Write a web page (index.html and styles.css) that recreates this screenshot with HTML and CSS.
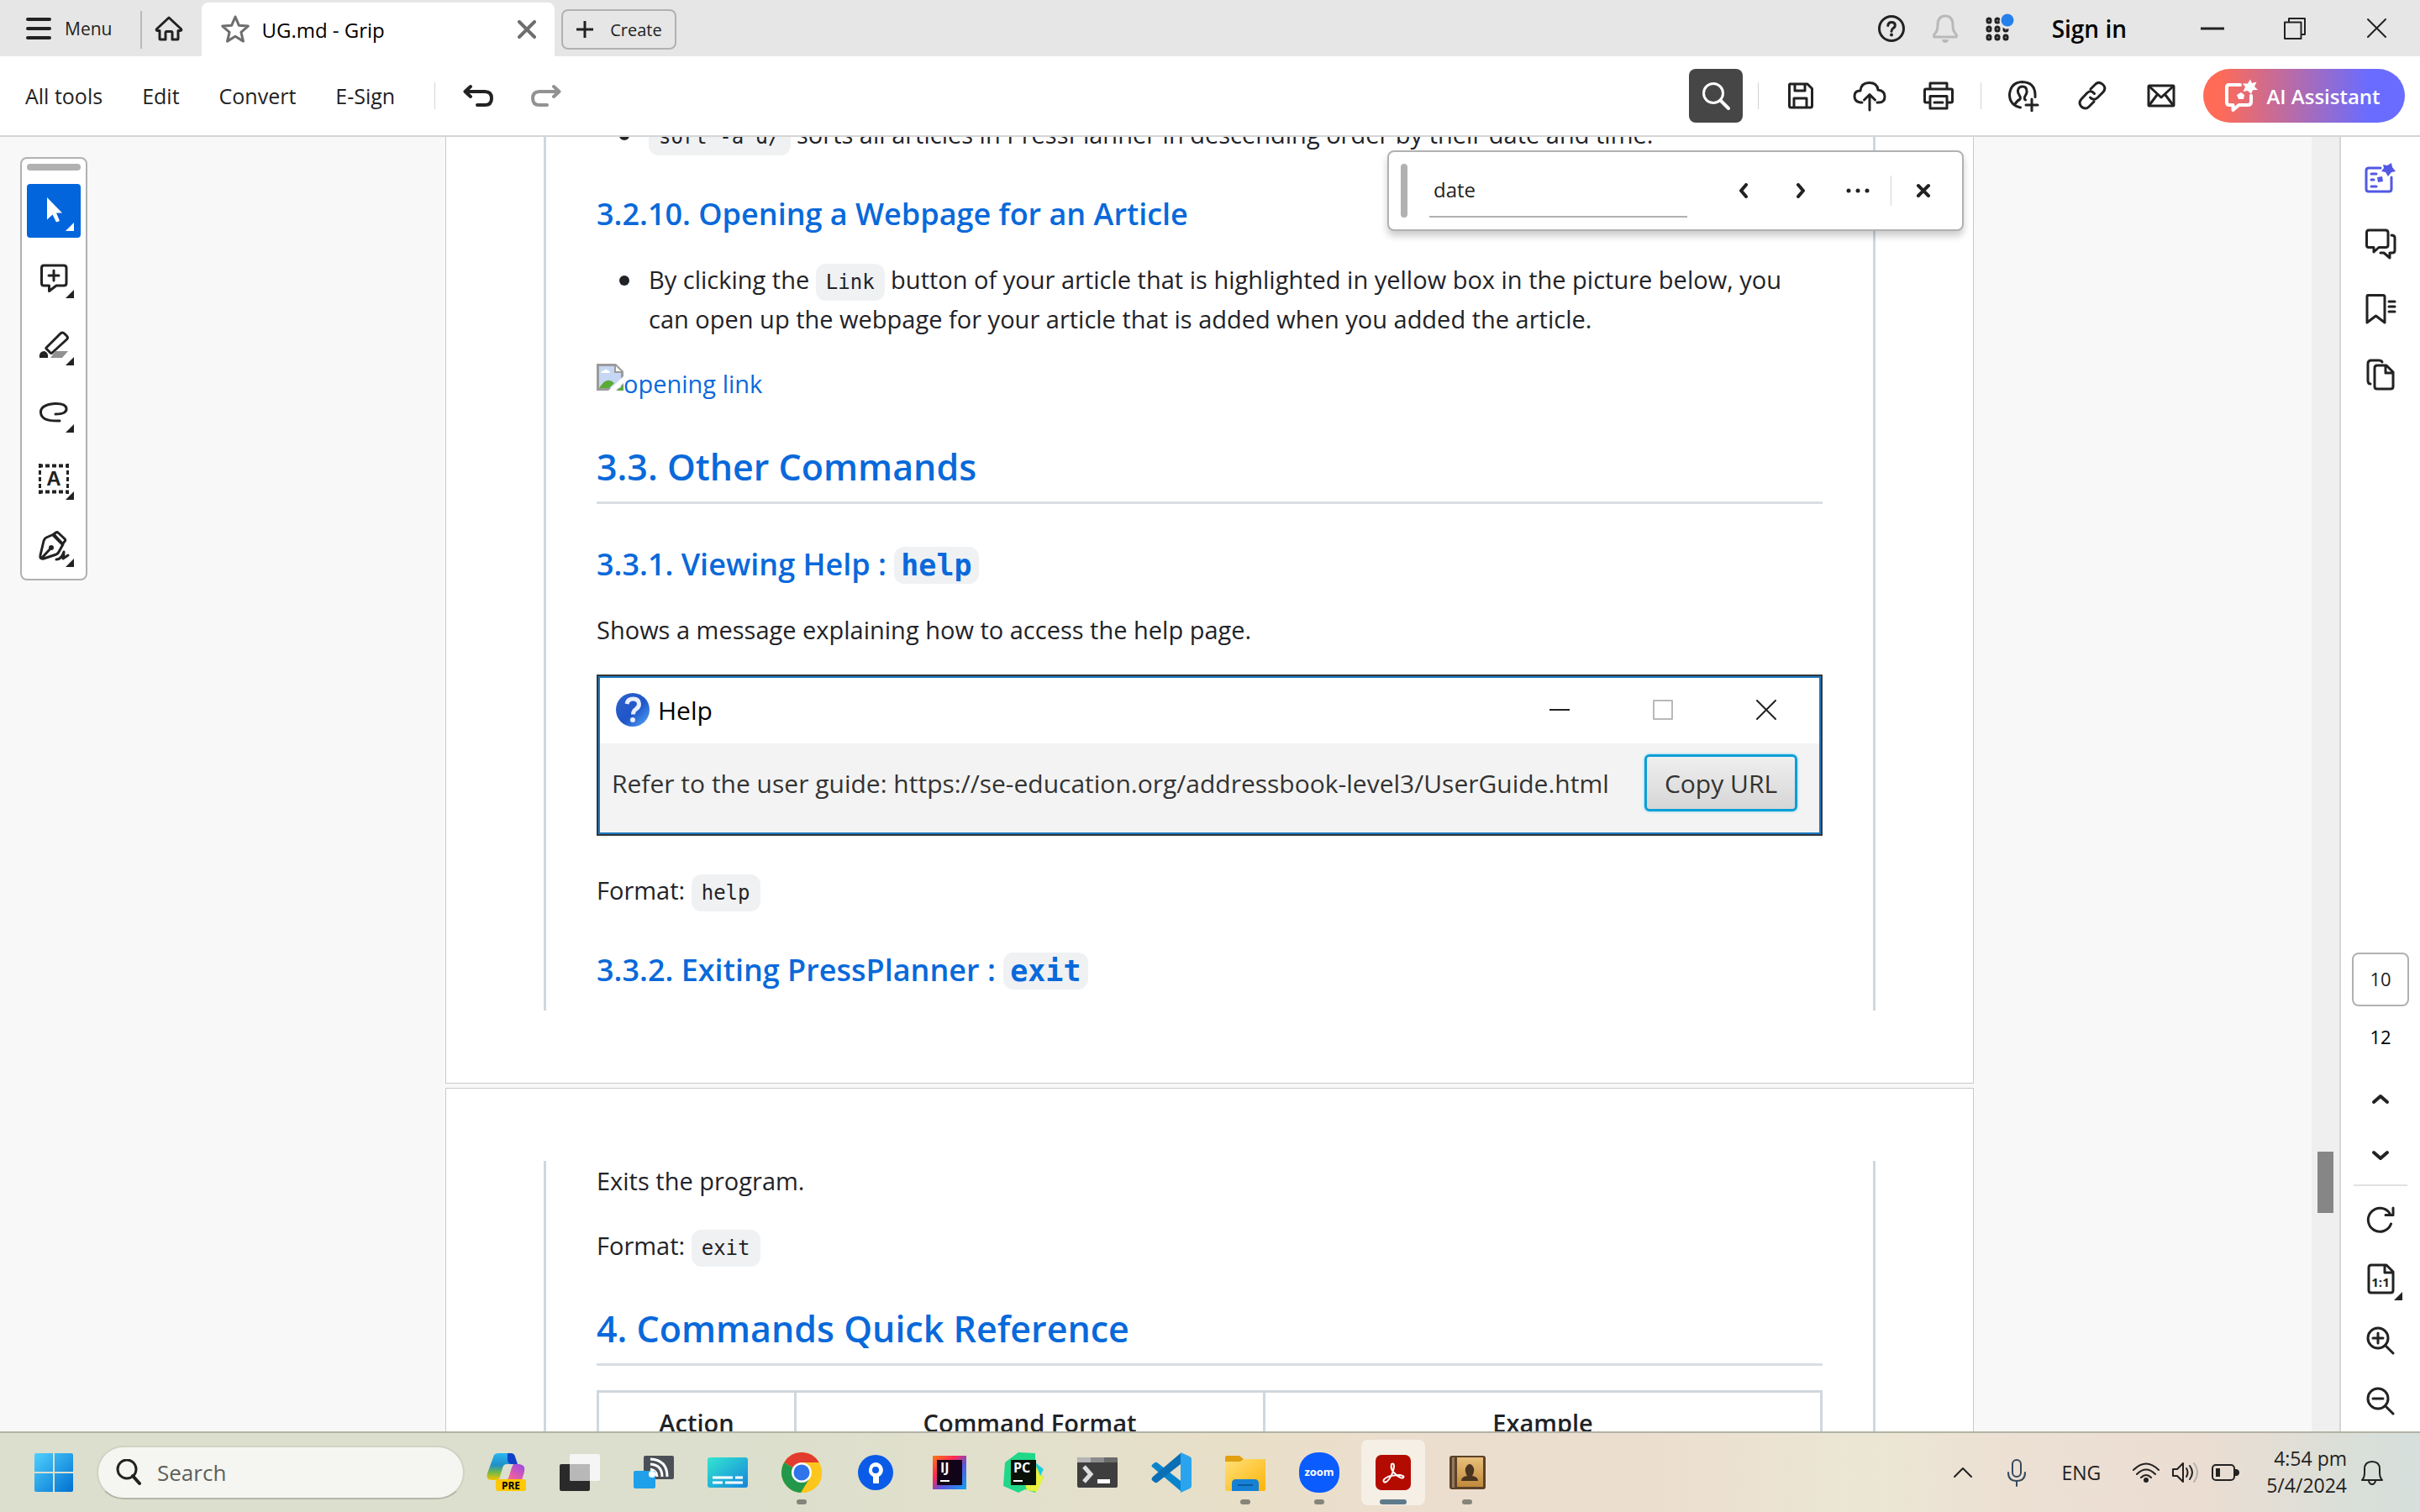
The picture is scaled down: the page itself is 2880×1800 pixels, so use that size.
FILE: index.html
```html
<!DOCTYPE html>
<html lang="en">
<head>
<meta charset="utf-8">
<title>UG.md - Grip</title>
<link rel="stylesheet" href="styles.css">
</head>
<body>
<header class="titlebar">
  <button class="menu-btn"><svg class="ico" width="30" height="26" viewBox="0 0 30 26"><path d="M2 2h26M2 13h26M2 24h26" stroke-width="4"/></svg>Menu</button>
  <span class="title-divider"></span>
  <button class="home-btn" aria-label="Home"><svg class="ico" width="34" height="30" viewBox="0 0 34 30"><path d="M17 2 2.500 15.500q-1 1.500 1 2H6V27q0 1 1 1h6v-8q0-1.500 1.500-1.500h5q1.500 0 1.500 1.500v8h6q1 0 1-1v-9.500h2.500q2-.5 1-2z" stroke-width="3"/></svg></button>
  <div class="tab">
    <svg class="ico gray" width="36" height="36" viewBox="0 0 36 36"><path d="M18 3l4.300 10.200 11 .9-8.400 7.200 2.600 10.800L18 26.300l-9.500 5.800 2.600-10.800-8.400-7.200 11-.9z" stroke-width="3"/></svg>
    <span class="tab-name">UG.md - Grip</span>
    <button class="tab-close" aria-label="Close tab"><svg class="ico gray" width="22" height="22" viewBox="0 0 22 22"><path d="M2 2l18 18M20 2 2 20" stroke-width="4"/></svg></button>
  </div>
  <button class="create-btn"><svg class="ico" width="20" height="20" viewBox="0 0 20 20"><path d="M10 0v20M0 10h20" stroke-width="3"/></svg>Create</button>
  <div class="title-right">
    <button class="t-ico" aria-label="Help"><svg class="ico" width="34" height="34" viewBox="0 0 34 34"><circle cx="17" cy="17" r="14.500" stroke-width="3"/><path d="M12.800 13.500q.4-4 4.400-4t4.200 3.600q0 2-2.200 3.500t-2.200 3.600" stroke-width="3"/><circle cx="17" cy="24.500" r="2" fill="#222" stroke="none"/></svg></button>
    <button class="t-ico" aria-label="Notifications"><svg class="ico pale" width="34" height="36" viewBox="0 0 34 36"><path d="M4 28q-1.500-2 1.500-5 2.500-3 2.500-9 0-11 9-11t9 11q0 6 2.500 9 3 3 1.500 5z" stroke-width="3"/><path d="M13 31h8q-.5 4-4 4t-4-4z" fill="#b9b9b9" stroke="none"/></svg></button>
    <button class="t-ico" aria-label="Apps"><svg class="ico" width="36" height="36" viewBox="0 0 36 36"><g stroke-width="3"><rect x="4" y="6" width="4" height="5" rx="2"/><rect x="14" y="6" width="4" height="5" rx="2"/><rect x="4" y="16" width="4" height="5" rx="2"/><rect x="14" y="16" width="4" height="5" rx="2"/><rect x="24" y="16" width="4" height="5" rx="2"/><rect x="4" y="26" width="4" height="5" rx="2"/><rect x="14" y="26" width="4" height="5" rx="2"/><rect x="24" y="26" width="4" height="5" rx="2"/></g><circle cx="28" cy="9" r="9.500" fill="#e6e6e6" stroke="none"/><circle cx="28" cy="8" r="7.500" fill="#2680eb" stroke="none"/></svg></button>
    <button class="signin">Sign in</button>
    <button class="win" aria-label="Minimize"><svg class="ico" width="28" height="26" viewBox="0 0 28 26"><path d="M0 13h28" stroke-width="3"/></svg></button>
    <button class="win" aria-label="Restore"><svg class="ico" width="26" height="26" viewBox="0 0 26 26"><path d="M6 5V1h19v19h-4M1 5.500h19.500V25H1z" stroke-width="2"/></svg></button>
    <button class="win" aria-label="Close"><svg class="ico" width="24" height="26" viewBox="0 0 24 26"><path d="M1 2l21 21M22 2 1 23" stroke-width="2"/></svg></button>
  </div>
</header>

<nav class="toolbar">
  <button class="word">All tools</button>
  <button class="word">Edit</button>
  <button class="word">Convert</button>
  <button class="word">E-Sign</button>
  <span class="bar-divider"></span>
  <button class="history" aria-label="Undo"><svg class="ico" width="36" height="28" viewBox="0 0 36 28"><path d="M9 3 2.500 9 9 15M3 9h23q8 0 8 8t-8 8h-9" stroke-width="4"/></svg></button>
  <button class="history" aria-label="Redo"><svg class="ico dim" width="36" height="28" viewBox="0 0 36 28"><path d="M27 3l6.500 6L27 15M33 9H10q-8 0-8 8t8 8h9" stroke-width="4"/></svg></button>
  <div class="bar-right">
    <button class="sq active" aria-label="Find"><svg class="ico white" width="36" height="36" viewBox="0 0 36 36"><circle cx="15" cy="15" r="11.500" stroke-width="3"/><path d="M23.500 23.500 33 33" stroke-width="4"/></svg></button>
    <span class="bar-divider"></span>
    <button class="sq" aria-label="Save"><svg class="ico" width="36" height="36" viewBox="0 0 36 36"><path d="M5 4h21l5.500 5.500V30q0 2-2 2h-23q-2 0-2-2V5zM11 4v8h12V4M10 32V21h15v11" stroke-width="3"/></svg></button>
    <button class="sq" aria-label="Upload"><svg class="ico" width="40" height="38" viewBox="0 0 40 38"><path d="M11 27H9q-7-1-7-7.500T9 13q1-9.500 10.500-9.500T30 12q8 1 8 8t-7 7h-2" stroke-width="3"/><path d="M20 36V18M13.500 24l6.500-6.500 6.500 6.500" stroke-width="3"/></svg></button>
    <button class="sq" aria-label="Print"><svg class="ico" width="38" height="36" viewBox="0 0 38 36"><path d="M9 10V3h20v7M9 26H4q-1.500 0-1.500-1.500v-13Q2.500 10 4 10h30q1.500 0 1.500 1.500v13Q35.500 26 34 26h-5M9 18.500h20V33H9zM14 26h10" stroke-width="3"/></svg></button>
    <span class="bar-divider"></span>
    <button class="sq" aria-label="Add people"><svg class="ico" width="38" height="38" viewBox="0 0 38 38"><path d="M15.500 33Q2.500 30 2.500 17.500 4 3 17.500 2.500 32.500 3 33 17.500v3" stroke-width="3"/><path d="M9 29q3-4.500 5.500-5.500 2-1.500-.5-5.500-2-3-1.500-5.500Q13.500 8 18 8t5 5q.5 2.500-1.500 5.500-2.500 4 0 5.500M29 23v14M22 30h14" stroke-width="3"/></svg></button>
    <button class="sq" aria-label="Copy link"><svg class="ico" width="36" height="36" viewBox="0 0 36 36"><path d="M16 10l6-6q4-3.500 8.500.5t.5 9l-7 7q-4.500 4-8.500-.5M20 25l-6 6q-4 4-9 0-4-4.500 0-9l7-7.500q4.500-4 8.500 1" stroke-width="3"/></svg></button>
    <button class="sq" aria-label="Email"><svg class="ico" width="34" height="28" viewBox="0 0 34 28"><rect x="2" y="2" width="30" height="24" rx="1" stroke-width="3"/><path d="M3 3l14 13L31 3M3 25l9-12M31 25l-9-12" stroke-width="3"/></svg></button>
    <button class="ai-btn"><svg class="ico white" width="40" height="40" viewBox="0 0 40 40"><path d="M19 7H6q-3 0-3 3v18q0 3 3 3h4.500v6l7-6H28q4 0 4-4v-7" stroke-width="4"/><path d="M31 .5l2 4.500 5.500-1.500-2.500 5.500 4 4-6 .3-2 4.700-4-4-5.500 1 2.500-5.500L22 5.500h6z" fill="#fff" stroke="none"/><path d="M15 19l5-3 4 3-1 5h-6z" fill="#fff" stroke="none"/></svg>AI Assistant</button>
  </div>
</nav>

<main class="workspace">
  <aside class="rail">
    <div class="tools">
      <span class="grip"></span>
      <button class="tool on" aria-label="Select"><svg class="ico" width="64" height="64" viewBox="0 0 64 64"><path d="M24 16v26.500l6.500-6 4.500 9 4-1.500-4-9.500h7z" fill="#fff" stroke="none"/><path d="M56 46v10H46z" fill="#fff" stroke="none"/></svg></button>
      <button class="tool" aria-label="Comment"><svg class="ico" width="64" height="64" viewBox="0 0 64 64"><path d="M20 17h24q3 0 3 3v18q0 3-3 3h-9l-8.500 6.500V41H20q-2.500 0-2.500-3V20q0-3 2.500-3zM26 29h12M32 23v12" stroke-width="3"/><path d="M56 46v10H46z" fill="#222" stroke="none"/></svg></button>
      <button class="tool" aria-label="Highlight"><svg class="ico" width="64" height="64" viewBox="0 0 64 64"><path d="M23 35l17-17q2.500-2 4.500 0l3 3q2 2 0 4L30 41q-1 1-2 0l-5-5q-.5-.5 0-1z" stroke-width="3"/><path d="M15 47q-1-8 6-8 5 2 4 8z" fill="#222" stroke="none"/><path d="M28 47l6-8h15l-7 8z" fill="#929292" stroke="none"/><path d="M56 46v10H46z" fill="#222" stroke="none"/></svg></button>
      <button class="tool" aria-label="Draw"><svg class="ico" width="64" height="64" viewBox="0 0 64 64"><path d="M34 34q14 0 13-7-1-6-14-5.500Q16 23 16.500 32 17 43 39 42" stroke-width="3"/><path d="M56 46v10H46z" fill="#222" stroke="none"/></svg></button>
      <button class="tool letter" aria-label="Text"><svg class="ico" width="64" height="64" viewBox="0 0 64 64"><path d="M14 15.500h36M14 46.500h36" stroke-width="4" stroke-dasharray="5 3" stroke-linecap="butt"/><path d="M15.500 13v36M48.500 13v36" stroke-width="3" stroke-dasharray="5 3" stroke-linecap="butt"/><text x="32" y="39" text-anchor="middle" class="svg-a">A</text><path d="M56 46v10H46z" fill="#222" stroke="none"/></svg></button>
      <button class="tool" aria-label="Sign"><svg class="ico" width="64" height="64" viewBox="0 0 64 64"><path d="M32 17l-9 4q-2 1-3 4l-4 17q-1 5 4 4l15-5q2-1 3-3l5-9zM18 45l11-12" stroke-width="3"/><path d="M31 18l3.500-3q1.500-1 3 .5l7.500 7q1.500 1.500 0 3L42 29z" stroke-width="3"/><circle cx="29" cy="33" r="3" fill="#222" stroke="none"/><path d="M35 47q6 0 9-9 0 4-1 8l6-4" stroke-width="3"/><path d="M56 46v10H46z" fill="#222" stroke="none"/></svg></button>
    </div>
  </aside>

  <section class="viewer">
    <div class="pages">
      <div class="page page-first">
        <article class="sheet">
          <ul><li><code>sort -a d/</code> sorts all articles in PressPlanner in descending order by their date and time.</li></ul>
          <h3><a href="#webpage">3.2.10. Opening a Webpage for an Article</a></h3>
          <ul><li>By clicking the <code>Link</code> button of your article that is highlighted in yellow box in the picture below, you can open up the webpage for your article that is added when you added the article.</li></ul>
          <p><a href="#link"><svg class="broken" width="32" height="32" viewBox="0 0 32 32"><path d="M0 0h23l9 9v23H0z" fill="#9b9b9b"/><path d="M3 3h18v8h8v18H3z" fill="#c5d7f4"/><path d="M23 3l6 6h-6z" fill="#fff"/><path d="M5 11q1-3 4-3 2-3 4 0 3 0 3 3z" fill="#fff"/><path d="M3 29q9-15 18-6l-6 6z" fill="#5aab35"/><path d="M32 15v8l-9 9h-9z" fill="#fff"/><path d="M32 25v7h-7z" fill="#5aab35"/></svg>opening link</a></p>
          <h2><a href="#other">3.3. Other Commands</a></h2>
          <h3><a href="#help">3.3.1. Viewing Help : <code>help</code></a></h3>
          <p>Shows a message explaining how to access the help page.</p>
          <div class="dialog">
            <div class="dialog-head">
              <svg width="42" height="42" viewBox="0 0 42 42"><defs><linearGradient id="hq" x1="0" y1="0" x2="1" y2="1"><stop offset="0" stop-color="#2f62cc"/><stop offset=".55" stop-color="#1f55c8"/><stop offset="1" stop-color="#55aaf8"/></linearGradient></defs><circle cx="21" cy="21" r="20" fill="url(#hq)"/><path d="M14 14q1-6 7.500-6t7 6q0 4-4 6.500-3 2-3 6" fill="none" stroke="#e8eefc" stroke-width="5"/><circle cx="21" cy="33" r="3" fill="#e8eefc"/></svg>
              <span class="dialog-title">Help</span>
              <svg class="ico" width="24" height="24" viewBox="0 0 24 24"><path d="M0 12h24" stroke-width="2"/></svg>
              <svg class="ico pale" width="24" height="24" viewBox="0 0 24 24"><path d="M1 1h22v22H1z" stroke-width="2"/></svg>
              <svg class="ico" width="24" height="24" viewBox="0 0 24 24"><path d="M1 1l22 22M23 1 1 23" stroke-width="2"/></svg>
            </div>
            <div class="dialog-body"><span>Refer to the user guide: https://se-education.org/addressbook-level3/UserGuide.html</span><button class="copy">Copy URL</button></div>
          </div>
          <p>Format: <code>help</code></p>
          <h3><a href="#exit">3.3.2. Exiting PressPlanner : <code>exit</code></a></h3>
        </article>
      </div>
      <div class="page page-next">
        <article class="sheet">
          <p>Exits the program.</p>
          <p>Format: <code>exit</code></p>
          <h2><a href="#reference">4. Commands Quick Reference</a></h2>
          <table>
            <thead><tr><th class="c1">Action</th><th class="c2">Command Format</th><th>Example</th></tr></thead>
          </table>
        </article>
      </div>
    </div>
    <form class="find">
      <span class="find-grip"></span>
      <input class="find-input" type="text" value="date" aria-label="Find text">
      <button type="button" class="f-btn" aria-label="Previous"><svg class="ico" width="12" height="18" viewBox="0 0 12 18"><path d="M9 2 3 9l6 7" stroke-width="4"/></svg></button>
      <button type="button" class="f-btn" aria-label="Next"><svg class="ico" width="12" height="18" viewBox="0 0 12 18"><path d="M3 2l6 7-6 7" stroke-width="4"/></svg></button>
      <button type="button" class="f-btn" aria-label="More"><svg width="28" height="6" viewBox="0 0 28 6"><g fill="#222"><circle cx="3" cy="3" r="2.500"/><circle cx="14" cy="3" r="2.500"/><circle cx="25" cy="3" r="2.500"/></g></svg></button>
      <span class="find-divider"></span>
      <button type="button" class="f-btn" aria-label="Close"><svg class="ico" width="18" height="18" viewBox="0 0 18 18"><path d="M3 3l12 12M15 3 3 15" stroke-width="4"/></svg></button>
    </form>
  </section>

  <div class="scrollbar"><span class="thumb"></span></div>

  <aside class="side">
    <div class="side-top">
      <button aria-label="AI summary"><svg class="ico violet" width="38" height="38" viewBox="0 0 38 38"><path d="M19 7H5q-3 0-3 3v22q0 3 3 3h24q3 0 3-3V18M8 14h6M8 21h3M8 29h6" stroke-width="3"/><path d="M22 3l5 1 5-3 1 5 4 5-5 1-4 5-3-5-5-1 3-4z" fill="#5258e4" stroke="none"/><path d="M15 18l6-1 1 6-6 1z" fill="#5258e4" stroke="none"/></svg></button>
      <button aria-label="Comments"><svg class="ico" width="38" height="38" viewBox="0 0 38 38"><path d="M5 3h20q3 0 3 3v15q0 2.500-3 2.500h-8L11 29v-5.500H5q-2.500 0-2.500-2.500V6Q2.500 3 5 3z" stroke-width="3"/><path d="M32 9q4 0 4 3v15q0 3-3 3h-3v6l-7-6h-4" stroke-width="3"/></svg></button>
      <button aria-label="Bookmarks"><svg class="ico" width="38" height="38" viewBox="0 0 38 38"><path d="M4 2.500h18q2 0 2 2V35l-10.500-8L3 35V4q0-1.500 1-1.500zM29 10h7M29 16h7M29 22h7" stroke-width="3"/></svg></button>
      <button aria-label="Page thumbnails"><svg class="ico" width="38" height="38" viewBox="0 0 38 38"><path d="M7 30q-3 0-3-4V6q0-4 4-4h9q3 0 4 2" stroke-width="3"/><path d="M15 8h11l8 8v17q0 3-3 3H15q-3 0-3-3V11q0-3 3-3zM25 8v9h9" stroke-width="3"/></svg></button>
    </div>
    <div class="side-bottom">
      <input class="page-no" type="text" value="10" aria-label="Page number">
      <span class="page-total">12</span>
      <button class="step" aria-label="Previous page"><svg class="ico" width="22" height="14" viewBox="0 0 22 14"><path d="M3 11l8-7 8 7" stroke-width="4"/></svg></button>
      <button class="step" aria-label="Next page"><svg class="ico" width="22" height="14" viewBox="0 0 22 14"><path d="M3 3l8 7 8-7" stroke-width="4"/></svg></button>
      <span class="side-divider"></span>
      <button class="zoomer" aria-label="Rotate"><svg class="ico" width="34" height="34" viewBox="0 0 34 34"><path d="M29.500 22A14 14 0 1 1 28 9.500M32 3v8.500h-9" stroke-width="3"/></svg></button>
      <button class="zoomer" aria-label="Fit"><svg class="ico" width="64" height="50" viewBox="0 0 64 50"><path d="M21 7h18l8 8v22q0 3-3 3H21q-3 0-3-3V10q0-3 3-3zM37 7v9h9" stroke-width="3"/><text x="32" y="33" text-anchor="middle" class="svg-11">1:1</text><path d="M58 39v10H48z" fill="#222" stroke="none"/></svg></button>
      <button class="zoomer" aria-label="Zoom in"><svg class="ico" width="34" height="34" viewBox="0 0 34 34"><circle cx="14" cy="14" r="12" stroke-width="3"/><path d="M22.500 22.500 32 32M8 14h12M14 8v12" stroke-width="3"/></svg></button>
      <button class="zoomer" aria-label="Zoom out"><svg class="ico" width="34" height="34" viewBox="0 0 34 34"><circle cx="14" cy="14" r="12" stroke-width="3"/><path d="M22.500 22.500 32 32M8 14h12" stroke-width="3"/></svg></button>
    </div>
  </aside>
</main>

<footer class="taskbar">
  <svg width="0" height="0" class="defs"><defs>
    <linearGradient id="win" x1="0" y1="0" x2="1" y2="1"><stop offset="0" stop-color="#4fd0ff"/><stop offset="1" stop-color="#0070d0"/></linearGradient>
    <linearGradient id="cpa" x1="0" y1="0" x2="0" y2="1"><stop offset="0" stop-color="#28b6f0"/><stop offset=".45" stop-color="#1f8fc8"/><stop offset=".7" stop-color="#6fb84a"/><stop offset="1" stop-color="#f5c400"/></linearGradient>
    <linearGradient id="cpb" x1="1" y1="0" x2="0" y2="1"><stop offset="0" stop-color="#9a48e8"/><stop offset=".6" stop-color="#f0609a"/><stop offset="1" stop-color="#ff9060"/></linearGradient>
    <linearGradient id="cap" x1="0" y1="0" x2="1" y2="1"><stop offset="0" stop-color="#33e6d0"/><stop offset="1" stop-color="#1585dc"/></linearGradient>
    <linearGradient id="ij" x1="0" y1="0" x2="1" y2="1"><stop offset="0" stop-color="#f97a12"/><stop offset=".35" stop-color="#fe2857"/><stop offset=".6" stop-color="#5a55e0"/><stop offset="1" stop-color="#10a0f0"/></linearGradient>
    <linearGradient id="fold" x1="0" y1="0" x2="1" y2="1"><stop offset="0" stop-color="#ffe07a"/><stop offset="1" stop-color="#fcb408"/></linearGradient>
    <linearGradient id="bk" x1="0" y1="0" x2="0" y2="1"><stop offset="0" stop-color="#e8bf7a"/><stop offset="1" stop-color="#c08a3c"/></linearGradient>
  </defs></svg>
  <button class="start" aria-label="Start"><svg width="46" height="46" viewBox="0 0 46 46"><path d="M2 0h20v22H0V2q0-2 2-2zM24 0h20q2 0 2 2v20H24zM0 24h22v22H2q-2 0-2-2zM24 24h22v20q0 2-2 2H24z" fill="url(#win)"/></svg></button>
  <label class="search"><svg class="ico" width="30" height="32" viewBox="0 0 30 32"><circle cx="13" cy="12" r="11" stroke-width="3"/><path d="M20 20l8 9" stroke-width="4"/></svg><input type="text" placeholder="Search" aria-label="Search"></label>
  <div class="apps">
    <button aria-label="Copilot"><svg width="48" height="48" viewBox="0 0 48 48"><path d="M10 3q2-2 5-2h14q4 0 5 4l3 9H25q-4 0-5 5l-3 10q-1 4-5 4H7q-7 0-5-8z" fill="url(#cpa)"/><path d="M26 1h4q4 0 5 4l3 9h-8q-4-1-4-6z" fill="#1040c8"/><path d="M33 14h7q8 1 6 9l-3 10q-1 4-6 4H14q4-1 5-4h5q3-1 4-5l3-10z" fill="url(#cpb)"/><rect x="12" y="32" width="36" height="14" rx="3" fill="#ffc800"/><text x="30" y="44" text-anchor="middle" class="svg-pre">PRE</text></svg></button>
    <button aria-label="Task view"><svg width="48" height="48" viewBox="0 0 48 48"><rect x="0" y="14" width="36" height="32" rx="2" fill="#2a2a2a"/><rect x="12" y="2" width="36" height="32" rx="2" fill="#f5f5f5"/><path d="M12 14h24v20H14q-2 0-2-2z" fill="#b8b8b8"/></svg></button>
    <button aria-label="Wireless display"><svg width="48" height="48" viewBox="0 0 48 48"><rect x="12" y="4" width="36" height="28" rx="2" fill="#4b5057"/><path d="M20 20q8 2 8 9M20 14q14 1 14 15M20 8q20 1 20 21" fill="none" stroke="#fff" stroke-width="3"/><rect x="0" y="22" width="26" height="21" rx="2" fill="#20a0e8"/><circle cx="22" cy="26" r="4" fill="#fff"/></svg></button>
    <button aria-label="Captions"><svg width="48" height="48" viewBox="0 0 48 48"><rect y="6" width="48" height="36" rx="3" fill="url(#cap)"/><path d="M6 30h24M33 30h9M6 36h12M21 36h21" stroke="#fff" stroke-width="3"/></svg></button>
    <button class="run" aria-label="Chrome"><svg width="48" height="48" viewBox="0 0 48 48"><circle cx="24" cy="24" r="24" fill="#fcc61c"/><path d="M24 24 3.200 12A24 24 0 0 1 44.800 12z" fill="#e33b2e"/><path d="M24 24 3.200 12A24 24 0 0 0 23 48l11-18z" fill="#24984a"/><path d="M24 12h20.800Q48 18 48 24q0 18-18 23.500-3 .8-6 .5L35 30z" fill="#fcc61c"/><circle cx="24" cy="24" r="12" fill="#fff"/><circle cx="24" cy="24" r="9.500" fill="#2f74e8"/></svg></button>
    <button aria-label="Sourcetree"><svg width="48" height="48" viewBox="0 0 48 48"><circle cx="24" cy="24" r="21" fill="#0a5be8"/><path d="M24 12a9 9 0 0 1 4 17v8h-7v-8a9 9 0 0 1 3-17z" fill="#fff"/><circle cx="24" cy="21" r="4" fill="#0a5be8"/></svg></button>
    <button aria-label="IntelliJ"><svg width="48" height="48" viewBox="0 0 48 48"><path d="M4 4h40v40H4z" fill="url(#ij)"/><path d="M9 9h30v30H9z" fill="#120418"/><text x="13" y="24" class="svg-jb">IJ</text><path d="M13 34h11" stroke="#fff" stroke-width="2"/></svg></button>
    <button aria-label="PyCharm"><svg width="48" height="48" viewBox="0 0 48 48"><path d="M18 0 2 12 0 40l18 8 8-4 12 4 10-18-10-16V1z" fill="#21d789"/><path d="M24 30l14-14 10 14-8 17-12-2z" fill="#e8f340"/><path d="M38 12l10 8-4 8z" fill="#1ad0e0"/><path d="M9 9h30v30H9z" fill="#081008"/><text x="12" y="24" class="svg-jb">PC</text><path d="M12 34h11" stroke="#fff" stroke-width="2"/></svg></button>
    <button aria-label="Terminal"><svg width="48" height="48" viewBox="0 0 48 48"><rect y="6" width="48" height="36" rx="2" fill="#3e3e3e"/><path d="M2 6h14v6H0V8q0-2 2-2z" fill="#b5b5b5"/><path d="M16 6h16v6H16z" fill="#8c8c8c"/><path d="M32 6h14q2 0 2 2v4H32z" fill="#6a6a6a"/><path d="M8 17l8 9-8 9" fill="none" stroke="#ddd" stroke-width="5"/><path d="M24 34.500h15" stroke="#fff" stroke-width="5"/></svg></button>
    <button aria-label="VS Code"><svg width="48" height="48" viewBox="0 0 48 48"><path d="M2 14q-3 2 0 4l33 28V34L7 12q-2-1-5 2z" fill="#0a84cc"/><path d="M2 34q-3-2 0-5L35 1v13L7 36q-2 1-5-2z" fill="#0a6fb4"/><path d="M35 0l11 5q2 1 2 3v32q0 2-2 3l-11 5z" fill="#2aa4ee"/></svg></button>
    <button class="run" aria-label="File Explorer"><svg width="48" height="48" viewBox="0 0 48 48"><path d="M2 4h15l5 4h24q2 0 2 2v12H0V6q0-2 2-2z" fill="#e0a010"/><path d="M0 11h18l4-3h24q2 0 2 2v34q0 2-2 2H2q-2 0-2-2z" fill="url(#fold)"/><path d="M8 46V37q0-5 5-5h22q5 0 5 5v9z" fill="#1580d4"/><path d="M15 39h18" stroke="#0a5a9c" stroke-width="2"/></svg></button>
    <button class="run" aria-label="Zoom"><svg width="48" height="48" viewBox="0 0 48 48"><rect width="48" height="48" rx="22" fill="#0b5cff"/><text x="24" y="28" text-anchor="middle" class="svg-zoom">zoom</text></svg></button>
    <button class="current" aria-label="Acrobat"><svg width="48" height="48" viewBox="0 0 48 48"><rect x="3" y="3" width="42" height="42" rx="7" fill="#b30b00"/><path d="M13 35q-2-2 3-5 5-3 16-3 6 1 4 3t-8-3q-8-6-6-13 3-2 3 3-1 8-6 15-4 5-6 3z" fill="none" stroke="#fff" stroke-width="2"/></svg></button>
    <button class="run" aria-label="Address book"><svg width="48" height="48" viewBox="0 0 48 48"><rect x="3" y="4" width="43" height="40" rx="3" fill="#5c4228"/><path d="M12 6h31v35H12z" fill="url(#bk)"/><path d="M6 6h3v36H6z" fill="#8f7a5c"/><path d="M17 34q0-5 7-6-3-5-2-9 2-5 5-5t5 5q1 4-2 9 7 1 7 6z" fill="#4a3420"/></svg></button>
  </div>
  <div class="tray">
    <button class="t-chev" aria-label="Hidden icons"><svg class="ico" width="24" height="14" viewBox="0 0 24 14"><path d="M2 12 12 2l10 10" stroke-width="2"/></svg></button>
    <button class="t-mic" aria-label="Microphone"><svg class="ico navy" width="24" height="34" viewBox="0 0 24 34"><rect x="7" y="2" width="10" height="20" rx="5" stroke-width="2"/><path d="M2 17q0 10 10 10t10-10M12 27v6" stroke-width="2"/></svg></button>
    <button class="t-lang">ENG</button>
    <button class="t-net" aria-label="Network, volume, battery"><svg class="ico" width="34" height="26" viewBox="0 0 34 26"><path d="M2 10q15-15 30 0M6 15q11-11 22 0M11 19q6-6 12 0" stroke-width="2"/><circle cx="17" cy="22" r="3" fill="#222" stroke="none"/></svg><svg class="ico" width="34" height="28" viewBox="0 0 34 28"><path d="M2 10h5l7-7v22l-7-7H2zM18 9q3 5 0 10M22 6q6 8 0 16" stroke-width="2"/><path d="M27 3q8 11 0 22" stroke="#b9b0a8" stroke-width="2"/></svg><svg class="ico" width="34" height="22" viewBox="0 0 34 22"><rect x="2" y="2" width="26" height="18" rx="4" stroke-width="2"/><path d="M6 6h5v10H6zM29 7h2q3 1 3 4t-3 4h-2z" fill="#222" stroke="none"/></svg></button>
    <div class="clock"><span>4:54 pm</span><span>5/4/2024</span></div>
    <button class="t-bell" aria-label="Notification center"><svg class="ico" width="28" height="32" viewBox="0 0 28 32"><path d="M2 25q3-3 3-9V12q0-9 9-9t9 9v4q0 6 3 9zM10 26q1 4 4 4t4-4" stroke-width="2"/></svg></button>
  </div>
</footer>
</body>
</html>
```
FILE: styles.css
```css
* { box-sizing: border-box; }

body {
  margin: 0;
  height: 100vh;
  display: flex;
  flex-direction: column;
  overflow: hidden;
  font-family: "Open Sans", "Noto Sans", sans-serif;
  font-size: 24px;
  color: #222;
  background: #f8f8f8;
}

button {
  font: inherit;
  color: inherit;
  background: none;
  border: 0;
  padding: 0;
  display: flex;
  align-items: center;
  justify-content: center;
  flex-shrink: 0;
}

input { font: inherit; color: inherit; border: 0; background: none; padding: 0; }
svg { display: block; flex-shrink: 0; }

.ico { fill: none; stroke: #222; stroke-linecap: round; stroke-linejoin: round; }
.gray { stroke: #6e6e6e; }
.dim { stroke: #929292; }
.pale { stroke: #b9b9b9; }
.white { stroke: #fff; }
.violet { stroke: #5258e4; }
.navy { stroke: #34495e; }

/* Title bar */
.titlebar {
  flex: 0 0 67px;
  display: flex;
  align-items: center;
  background: #e6e6e6;
}
.menu-btn { margin-left: 31px; gap: 16px; font-size: 21px; }
.title-divider { width: 2px; height: 45px; margin: 3px 15px 0 34px; background: #b9b9b9; }
.tab {
  align-self: flex-end;
  display: flex;
  align-items: center;
  width: 420px;
  height: 64px;
  margin-left: 22px;
  padding: 0 22px;
  gap: 13px;
  border-radius: 8px 8px 0 0;
  background: #fff;
  color: #000;
}
.tab-name { flex: 1; }
.create-btn {
  width: 137px;
  height: 48px;
  margin: 3px 0 0 8px;
  gap: 20px;
  border: 2px solid #b1b1b1;
  border-radius: 8px;
  font-size: 20px;
}
.title-right { display: flex; align-items: center; margin-left: auto; padding-right: 2px; }
.t-ico { width: 64px; height: 64px; }
.signin { margin: 0 53px 0 31px; font-size: 28px; font-weight: 600; color: #000; }
.win { width: 98px; height: 64px; }

/* Command bar */
.toolbar {
  flex: 0 0 96px;
  display: flex;
  align-items: center;
  padding: 0 18px 0 30px;
  background: #fff;
  border-bottom: 2px solid #d5d5d5;
}
.word { margin-right: 47px; font-size: 25px; }
.bar-divider { width: 1px; height: 32px; background: #d5d5d5; }
.history { width: 36px; height: 64px; margin-left: 33px; }
.history + .history { margin-left: 45px; }
.bar-right { display: flex; align-items: center; gap: 18px; margin-left: auto; }
.sq { width: 64px; height: 64px; border-radius: 8px; }
.active { background: #464646; }
.ai-btn {
  width: 240px;
  height: 64px;
  gap: 10px;
  padding-right: 4px;
  border-radius: 32px;
  background: linear-gradient(90deg, #ff6b57 8%, #6a6cff 82%);
  color: #fff;
  font-weight: 600;
}

/* Workspace */
.workspace { flex: 1; min-height: 0; display: flex; }
.rail { flex: 0 0 128px; padding: 24px 0 0 24px; }
.tools {
  width: 80px;
  display: flex;
  flex-direction: column;
  align-items: center;
  gap: 16px;
  padding: 6px;
  border: 2px solid #b1b1b1;
  border-radius: 8px;
  background: #fff;
}
.grip { width: 64px; height: 8px; border-radius: 4px; background: #b1b1b1; }
.tool { width: 64px; height: 64px; border-radius: 4px; }
.on { background: #0265dc; }
.svg-a { font: bold 24px "Liberation Sans", sans-serif; fill: #222; stroke: none; }
.svg-11 { font: bold 15px "Open Sans", sans-serif; fill: #222; stroke: none; }

.viewer { flex: 1; min-width: 0; position: relative; overflow: hidden; }
.pages {
  max-width: 1819px;
  margin: -28px auto 0;
  color: #1f2328;
  font-size: 29px;
  line-height: 47px;
}
.page {
  padding: 0 116px;
  background: #fff;
  border: 1px solid #c8c8c8;
}
.page-first { padding-bottom: 86px; }
.page-next { margin-top: 5px; padding-top: 86px; }
.sheet {
  padding: 0 60px 23px;
  border: solid #d0d7de;
  border-width: 0 3px;
}
.sheet a { color: #0969da; text-decoration: none; }
.sheet p, .sheet ul { margin: 0 0 30px; }
.sheet ul { padding-left: 62px; list-style: none; }
.sheet li { position: relative; }
.sheet li::before {
  content: "";
  position: absolute;
  left: -35px;
  top: 19px;
  width: 12px;
  height: 12px;
  border-radius: 50%;
  background: #1f2328;
}
.sheet h2, .sheet h3 { margin: 47px 0 29px; font-weight: 600; }
.sheet h3 { font-size: 36px; line-height: 50px; }
.sheet h3:last-child { margin-bottom: 0; }
.sheet h2 {
  padding-bottom: 12px;
  border-bottom: 3px solid #d8dee4;
  font-size: 43px;
  line-height: 58px;
}
.sheet code {
  padding: 8px 12px;
  border-radius: 12px;
  background: #eff1f3;
  font: 24px "DejaVu Sans Mono", monospace;
}
.sheet h3 code { padding: 2px 8px; font-size: 35px; font-weight: bold; }
.broken { display: inline-block; vertical-align: 3px; }

.dialog {
  margin-bottom: 41px;
  border: 2px solid #33373b;
  outline: 2px solid #1b78c0;
  outline-offset: -4px;
  background: #f3f3f3;
  color: #333;
}
.dialog-head {
  height: 80px;
  display: flex;
  align-items: center;
  padding: 0 53px 0 20px;
  gap: 99px;
  background: #fff;
  color: #000;
}
.dialog-title { flex: 1; margin-left: -90px; font-size: 30px; }
.dialog-body {
  display: flex;
  align-items: center;
  justify-content: space-between;
  height: 108px;
  padding: 0 28px 14px 16px;
  font-size: 30px;
}
.copy {
  width: 182px;
  height: 68px;
  border: 3px solid #0a9fd8;
  border-radius: 6px;
  background: linear-gradient(#efefef, #d6d6d6);
  box-shadow: 0 0 3px #6cc8ea;
}

.sheet table { width: 100%; border-collapse: collapse; }
.sheet th { padding: 12px; border: 3px solid #d0d7de; font-weight: 600; }
.c1 { width: 235px; }
.c2 { width: 558px; }

/* Find bar floats over the page */
.find {
  position: absolute;
  top: 16px;
  right: 414px;
  width: 686px;
  height: 96px;
  display: flex;
  align-items: center;
  padding: 0 12px 0 14px;
  border: 2px solid #b1b1b1;
  border-radius: 8px;
  background: #fff;
  box-shadow: 0 6px 8px rgba(0, 0, 0, .2);
}
.find-grip { width: 8px; height: 64px; border-radius: 4px; background: #b1b1b1; }
.find-input {
  width: 307px;
  height: 64px;
  margin: 0 33px 0 26px;
  padding: 0 5px 2px;
  border-bottom: 2px solid #b1b1b1;
}
.f-btn { width: 68px; height: 64px; }
.find-divider { width: 1px; height: 36px; margin: 0 4px 0 5px; background: #d5d5d5; }

.scrollbar { flex: 0 0 33px; background: #efefef; padding: 1208px 7px 0; }
.thumb { display: block; height: 73px; background: #868686; }

/* Side panel */
.side {
  flex: 0 0 96px;
  display: flex;
  flex-direction: column;
  justify-content: space-between;
  border-left: 2px solid #d5d5d5;
  background: #fff;
}
.side-top {
  display: flex;
  flex-direction: column;
  align-items: center;
  gap: 14px;
  padding-top: 17px;
}
.side-top button { width: 64px; height: 64px; }
.side-bottom { display: flex; flex-direction: column; align-items: center; }
.page-no {
  width: 68px;
  height: 64px;
  padding-bottom: 3px;
  border: 2px solid #b1b1b1;
  border-radius: 8px;
  text-align: center;
  font-size: 22px;
}
.page-total { padding-bottom: 3px; font-size: 22px; line-height: 73px; color: #000; }
.step { width: 64px; height: 68px; }
.side-divider { width: 64px; height: 2px; margin-bottom: 4px; background: #e1e1e1; }
.zoomer { width: 64px; height: 72px; }

/* Taskbar */
.taskbar {
  flex: 0 0 96px;
  display: flex;
  align-items: center;
  padding: 0 43px 0 41px;
  border-top: 2px solid #b2b3a6;
  background: linear-gradient(90deg, #dcdfcd 0%, #dcdfcd 31%, #e2e0cb 43%, #e9dfc8 52%, #ecdecf 58%, #ecdecf 68%, #ebe6d4 77%, #ecdfd3 84%, #ebddd2 91%, #dadfd8 97%, #d6dfdc 100%);
}
.defs { position: absolute; }
.search {
  width: 438px;
  height: 64px;
  margin: 0 11px 0 28px;
  display: flex;
  align-items: center;
  gap: 19px;
  padding: 0 21px;
  border: 2px solid #d0d2c3;
  border-bottom-color: #b5b7a9;
  border-radius: 32px;
  background: #f5f6f1;
}
.search input { flex: 1; min-width: 0; font-size: 26px; }
.search input::placeholder { color: #5f5f5b; opacity: 1; }
.apps { display: flex; gap: 12px; }
.apps button { position: relative; width: 76px; height: 78px; border-radius: 8px; }
.run::after, .current::after {
  content: "";
  position: absolute;
  bottom: 1px;
  left: 32px;
  width: 12px;
  height: 6px;
  border-radius: 3px;
  background: #85857a;
}
.current { background: #f5efe6; }
.current::after { left: 22px; width: 32px; background: #5f7a8a; }
.svg-pre { font: bold 12px "Open Sans", sans-serif; fill: #000; }
.svg-jb { font: bold 16px "Open Sans", sans-serif; fill: #fff; }
.svg-zoom { font: bold 13px "Open Sans", sans-serif; fill: #fff; }

.tray { display: flex; align-items: center; margin-left: auto; height: 94px; }
.t-mic { margin-left: 40px; }
.t-lang { margin-left: 41px; font-size: 23px; }
.t-net { margin-left: 37px; gap: 13px; }
.clock {
  display: flex;
  flex-direction: column;
  align-items: flex-end;
  margin-left: 32px;
  padding-bottom: 2px;
  font-size: 23px;
  line-height: 32px;
}
.t-bell { margin-left: 16px; }
```
